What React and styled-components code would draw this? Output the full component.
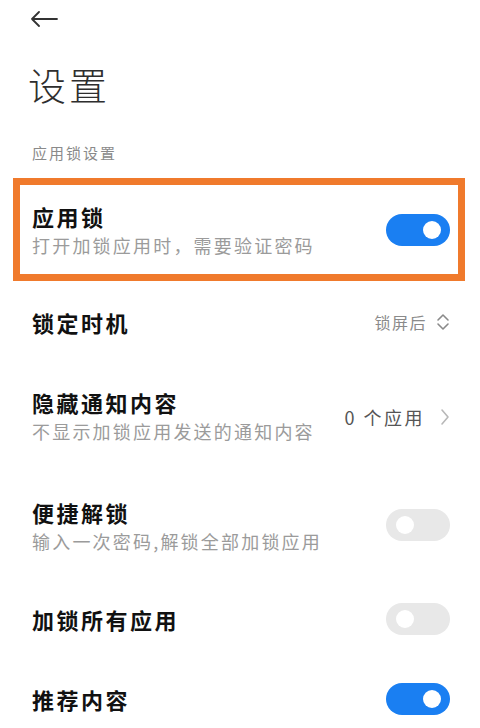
import React from "react";
import styled, { createGlobalStyle } from "styled-components";

const GlobalStyle = createGlobalStyle`
  body {
    margin: 0;
    background: #ffffff;
    font-family: "Noto Sans CJK SC", "Noto Sans", sans-serif;
  }
`;

const Page = styled.div`
  width: 480px;
  height: 728px;
  overflow: hidden;
  padding: 0 30px 0 32px;
  box-sizing: border-box;
  background: #ffffff;
`;

const BackButton = styled.div`
  display: flex;
  padding-top: 11px;
  margin-left: -2px;
  color: #333333;
`;

const Title = styled.h1`
  margin: 32px 0 0 -4px;
  font-size: 38px;
  line-height: 50px;
  font-weight: 300;
  letter-spacing: 3px;
  color: #2e2e2e;
`;

const SectionLabel = styled.div`
  margin-top: 33px;
  font-size: 15px;
  line-height: 22px;
  letter-spacing: 2px;
  color: #8a8a8a;
`;

const Row = styled.div`
  display: flex;
  align-items: center;
  justify-content: space-between;
  height: ${(p) => p.$h}px;
  box-sizing: border-box;
`;

const Highlight = styled(Row)`
  margin: 14px -15px 0 -19px;
  border: 7px solid #f07a2c;
  padding: 0 8px 0 12px;
`;

const TextBlock = styled.div`
  display: flex;
  flex-direction: column;
  margin-top: ${(p) => p.$shift || 0}px;
`;

const ItemTitle = styled.div`
  font-size: 22px;
  line-height: 30px;
  font-weight: 700;
  letter-spacing: 2.5px;
  color: #111111;
`;

const ItemSub = styled.div`
  font-size: 18px;
  line-height: 28px;
  letter-spacing: 2.2px;
  color: #9b9b9b;
`;

const Switch = styled.div`
  position: relative;
  flex-shrink: 0;
  width: 64px;
  height: 32px;
  border-radius: 16px;
  background: ${(p) => (p.$on ? "#1a7ff2" : "#e8e8e8")};
  &::after {
    content: "";
    position: absolute;
    top: 7px;
    ${(p) => (p.$on ? "right: 9px;" : "left: 10px;")}
    width: 18px;
    height: 18px;
    border-radius: 50%;
    background: #ffffff;
  }
`;

const Value = styled.div`
  display: flex;
  align-items: center;
  gap: ${(p) => p.$gap}px;
  font-size: ${(p) => p.$size}px;
  letter-spacing: ${(p) => p.$spacing}px;
  color: ${(p) => p.$color};
`;

const BackArrow = () => (
  <svg width="28" height="16" viewBox="0 0 28 16" fill="none">
    <path
      d="M27 8H2M9 1L2 8l7 7"
      stroke="currentColor"
      strokeWidth="1.8"
      strokeLinecap="round"
      strokeLinejoin="round"
    />
  </svg>
);

const UpDown = () => (
  <svg width="14" height="18" viewBox="0 0 14 18" fill="none">
    <path
      d="M2 7l5-5 5 5M2 11l5 5 5-5"
      stroke="#8a8a8a"
      strokeWidth="1.6"
      strokeLinecap="round"
      strokeLinejoin="round"
    />
  </svg>
);

const ChevronRight = () => (
  <svg width="10" height="18" viewBox="0 0 10 18" fill="none">
    <path
      d="M2 2l6 7-6 7"
      stroke="#b8b8b8"
      strokeWidth="1.6"
      strokeLinecap="round"
      strokeLinejoin="round"
    />
  </svg>
);

export default function App() {
  return (
    <>
      <GlobalStyle />
      <Page>
        <BackButton>
          <BackArrow />
        </BackButton>
        <Title>设置</Title>
        <SectionLabel>应用锁设置</SectionLabel>

        <Highlight $h={103}>
          <TextBlock $shift={0}>
            <ItemTitle>应用锁</ItemTitle>
            <ItemSub>打开加锁应用时，需要验证密码</ItemSub>
          </TextBlock>
          <Switch $on />
        </Highlight>

        <Row $h={82}>
          <ItemTitle>锁定时机</ItemTitle>
          <Value $size={16} $color="#8a8a8a" $gap={9} $spacing={1.5}>
            锁屏后
            <UpDown />
          </Value>
        </Row>

        <Row $h={108}>
          <TextBlock $shift={-2}>
            <ItemTitle>隐藏通知内容</ItemTitle>
            <ItemSub>不显示加锁应用发送的通知内容</ItemSub>
          </TextBlock>
          <Value $size={18} $color="#555555" $gap={15} $spacing={2.5}>
            0 个应用
            <ChevronRight />
          </Value>
        </Row>

        <Row $h={108}>
          <TextBlock $shift={2}>
            <ItemTitle>便捷解锁</ItemTitle>
            <ItemSub>输入一次密码,解锁全部加锁应用</ItemSub>
          </TextBlock>
          <Switch />
        </Row>

        <Row $h={80}>
          <ItemTitle>加锁所有应用</ItemTitle>
          <Switch />
        </Row>

        <Row $h={80}>
          <ItemTitle>推荐内容</ItemTitle>
          <Switch $on />
        </Row>
      </Page>
    </>
  );
}
